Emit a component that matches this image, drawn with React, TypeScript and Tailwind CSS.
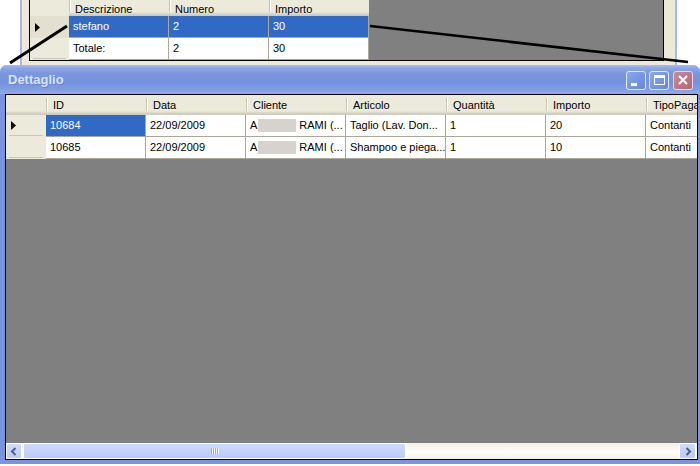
const detailCols = ["ID", "Data", "Cliente", "Articolo", "Quantità", "Importo", "TipoPagamento"]

const detailRows = [
    { id: "10684", data: "22/09/2009", articolo: "Taglio (Lav. Don...", qta: "1", importo: "20", tipo: "Contanti" },
    { id: "10685", data: "22/09/2009", articolo: "Shampoo e piega...", qta: "1", importo: "10", tipo: "Contanti" },
]

function Chevron({ dir }: { dir: "left" | "right" }) {
    return (
        <svg width="8" height="9" viewBox="0 0 8 9">
            <path
                d={dir === "left" ? "M5.5 1 L2 4.5 L5.5 8" : "M2.5 1 L6 4.5 L2.5 8"}
                fill="none"
                stroke="#4D6185"
                strokeWidth="2"
            />
        </svg>
    )
}

function SelectorArrow() {
    return (
        <svg width="5" height="9" viewBox="0 0 5 9">
            <path d="M0 0 L5 4.5 L0 9 Z" fill="#000" />
        </svg>
    )
}

function HeaderCell({ label, width }: { label: string; width: string }) {
    return (
        <div className={`${width} relative shrink-0 flex items-center pl-[7px] overflow-hidden whitespace-nowrap bg-[linear-gradient(to_bottom,#EBEADB_0%,#EBEADB_80%,#E2DECD_85%,#D6D2C2_92%,#CBC7B8_100%)]`}>
            <div className="absolute left-0 top-[3px] bottom-[4px] w-[1px] bg-[#C7C5B2]" />
            <div className="absolute left-[1px] top-[3px] bottom-[4px] w-[1px] bg-white" />
            {label}
        </div>
    )
}

export default function App() {
    return (
        <div className="relative w-[700px] h-[466px] overflow-hidden bg-white font-['Liberation_Sans',Arial,sans-serif] text-[11px] text-black">
            {/* Background form with the summary grid */}
            <div className="flex h-[65px]">
                <div className="w-[20px] bg-white" />
                <div className="w-[2px] bg-[#A9B6E6]" />
                <div className="w-[7px] bg-[#ECE9D8]" />
                <div className="w-[635px] flex flex-col">
                    <div className="h-[61px] flex flex-col bg-[#808080] border-x border-b border-black overflow-hidden">
                        {/* header (scrolled, top cut off) */}
                        <div className="flex h-[16px]">
                            <div className="w-[39px] shrink-0 bg-[#EBEADB]" />
                            {["Descrizione", "Numero", "Importo"].map((h) => (
                                <div
                                    key={h}
                                    className="relative w-[100px] shrink-0 flex items-start pt-[1px] pl-[6px] bg-[linear-gradient(to_bottom,#EBEADB_0%,#EBEADB_75%,#E2DECD_82%,#D6D2C2_90%,#CBC7B8_100%)]"
                                >
                                    <div className="absolute left-0 top-0 bottom-[4px] w-[1px] bg-[#C7C5B2]" />
                                    <div className="absolute left-[1px] top-0 bottom-[4px] w-[1px] bg-white" />
                                    {h}
                                </div>
                            ))}
                        </div>
                        {/* selected row */}
                        <div className="flex h-[22px]">
                            <div className="w-[39px] shrink-0 flex items-center pl-[5px] bg-[#E3E0D0]">
                                <SelectorArrow />
                            </div>
                            {["stefano", "2", "30"].map((v, i) => (
                                <div
                                    key={i}
                                    className="w-[100px] shrink-0 flex items-center pl-[4px] bg-[#316AC5] text-white border-r border-b border-[#ACA899]"
                                >
                                    {v}
                                </div>
                            ))}
                        </div>
                        {/* total row */}
                        <div className="flex h-[22px]">
                            <div className="w-[39px] shrink-0 bg-[#EBEADB] flex flex-col justify-end pb-[1px] px-[3px]">
                                <div className="h-[1px] bg-[#CBC7B8]" />
                            </div>
                            {["Totale:", "2", "30"].map((v, i) => (
                                <div
                                    key={i}
                                    className="w-[100px] shrink-0 flex items-center pl-[4px] bg-white border-r border-b border-[#ACA899]"
                                >
                                    {v}
                                </div>
                            ))}
                        </div>
                    </div>
                    <div className="flex-1 bg-[#ECE9D8]" />
                </div>
                <div className="w-[11px] bg-[#ECE9D8]" />
                <div className="w-[2px] bg-[#A9B6E6]" />
                <div className="flex-1 bg-white" />
            </div>

            {/* Dettaglio window */}
            <div className="h-[399px] flex flex-col rounded-t-[7px] bg-[#7A95DF] overflow-hidden">
                {/* Title bar */}
                <div className="h-[29px] shrink-0 flex items-center justify-between pl-[8px] pr-[7px] bg-[linear-gradient(to_bottom,#A9BDF0_0%,#8DA6E6_10%,#7A96E0_30%,#7592DE_60%,#819EE4_85%,#8FABEA_100%)]">
                    <span className="text-[13px] font-bold text-[#D8E2F8] [text-shadow:1px_1px_0_#6A83C8]">Dettaglio</span>
                    <div className="flex gap-[3px] pt-[1px]">
                        <div className="w-[20px] h-[19px] rounded-[3px] border border-[#E4EAFB] bg-[linear-gradient(135deg,#8AA6EC,#6686E0)] flex items-end pl-[4px] pb-[3px]">
                            <div className="w-[6px] h-[3px] bg-white" />
                        </div>
                        <div className="w-[20px] h-[19px] rounded-[3px] border border-[#E4EAFB] bg-[linear-gradient(135deg,#8AA6EC,#6686E0)] flex items-center justify-center">
                            <div className="w-[11px] h-[10px] border border-white border-t-[3px]" />
                        </div>
                        <div className="ml-[1px] w-[20px] h-[19px] rounded-[3px] border border-[#E8D8E0] bg-[linear-gradient(135deg,#CB8A98,#B36677)] flex items-center justify-center">
                            <svg width="10" height="10" viewBox="0 0 10 10">
                                <path d="M1 1 L9 9 M9 1 L1 9" stroke="#fff" strokeWidth="2" />
                            </svg>
                        </div>
                    </div>
                </div>

                {/* Client area */}
                <div className="flex-1 flex pl-[5px] pr-[2px] pb-[4px]">
                    <div className="flex-1 flex flex-col border border-black bg-[#808080] overflow-hidden">
                        {/* header row */}
                        <div className="flex h-[20px] shrink-0">
                            <div className="w-[40px] shrink-0 bg-[linear-gradient(to_bottom,#EBEADB_0%,#EBEADB_80%,#E2DECD_85%,#D6D2C2_92%,#CBC7B8_100%)]" />
                            {detailCols.map((c) => (
                                <HeaderCell key={c} label={c} width="w-[100px]" />
                            ))}
                        </div>
                        {detailRows.map((r, idx) => {
                            const selected = idx === 0
                            return (
                                <div key={r.id} className="flex h-[22px] shrink-0">
                                    <div className="w-[40px] shrink-0 flex flex-col bg-[#EBEADB]">
                                        <div className="flex-1 flex items-center pl-[5px]">
                                            {selected && <SelectorArrow />}
                                        </div>
                                        <div className="h-[1px] mx-[3px] mb-[1px] bg-[#CBC7B8]" />
                                    </div>
                                    <div
                                        className={`w-[100px] shrink-0 flex items-center pl-[4px] border-r border-b border-[#ACA899] ${selected ? "bg-[#316AC5] text-white" : "bg-white"}`}
                                    >
                                        {r.id}
                                    </div>
                                    <div className="w-[100px] shrink-0 flex items-center pl-[4px] bg-white border-r border-b border-[#ACA899]">
                                        {r.data}
                                    </div>
                                    <div className="w-[100px] shrink-0 flex items-center pl-[4px] bg-white border-r border-b border-[#ACA899] whitespace-nowrap">
                                        A
                                        <span className="inline-block w-[38px] h-[13px] ml-[1px] mr-[3px] bg-[#D6D3CE]" />
                                        RAMI (...
                                    </div>
                                    <div className="w-[100px] shrink-0 flex items-center pl-[4px] bg-white border-r border-b border-[#ACA899] whitespace-nowrap">
                                        {r.articolo}
                                    </div>
                                    <div className="w-[100px] shrink-0 flex items-center pl-[4px] bg-white border-r border-b border-[#ACA899]">
                                        {r.qta}
                                    </div>
                                    <div className="w-[100px] shrink-0 flex items-center pl-[4px] bg-white border-r border-b border-[#ACA899]">
                                        {r.importo}
                                    </div>
                                    <div className="w-[100px] shrink-0 flex items-center pl-[4px] bg-white border-r border-b border-[#ACA899]">
                                        {r.tipo}
                                    </div>
                                </div>
                            )
                        })}
                        <div className="flex-1" />

                        {/* horizontal scrollbar */}
                        <div className="h-[16px] shrink-0 flex bg-[linear-gradient(to_bottom,#F3F1E6,#FEFEFB_60%,#F3F1E6)]">
                            <div className="w-[16px] shrink-0 rounded-[2px] border border-white bg-[linear-gradient(to_bottom,#CFDCFC,#B9CCF7)] flex items-center justify-center">
                                <Chevron dir="left" />
                            </div>
                            <div className="ml-[1px] w-[383px] shrink-0 rounded-[2px] border border-white bg-[linear-gradient(to_bottom,#CCDAFC,#BACDF8)] flex items-center justify-center gap-[1px]">
                                {[0, 1, 2, 3].map((i) => (
                                    <div key={i} className="w-[1px] h-[6px] bg-[#8CAEF6] shadow-[1px_0_0_#EEF3FE]" />
                                ))}
                            </div>
                            <div className="flex-1" />
                            <div className="w-[17px] shrink-0 rounded-[2px] border border-white bg-[linear-gradient(to_bottom,#CFDCFC,#B9CCF7)] flex items-center justify-center">
                                <Chevron dir="right" />
                            </div>
                            <div className="w-[1px] shrink-0" />
                        </div>
                    </div>
                </div>
            </div>

            {/* annotation lines drawn over the screenshot */}
            <svg className="absolute inset-0 pointer-events-none" width="700" height="466" viewBox="0 0 700 466">
                <line x1="10" y1="63" x2="67" y2="26" stroke="#000" strokeWidth="3" />
                <line x1="370" y1="26" x2="688" y2="62" stroke="#000" strokeWidth="2.5" />
            </svg>
        </div>
    )
}
